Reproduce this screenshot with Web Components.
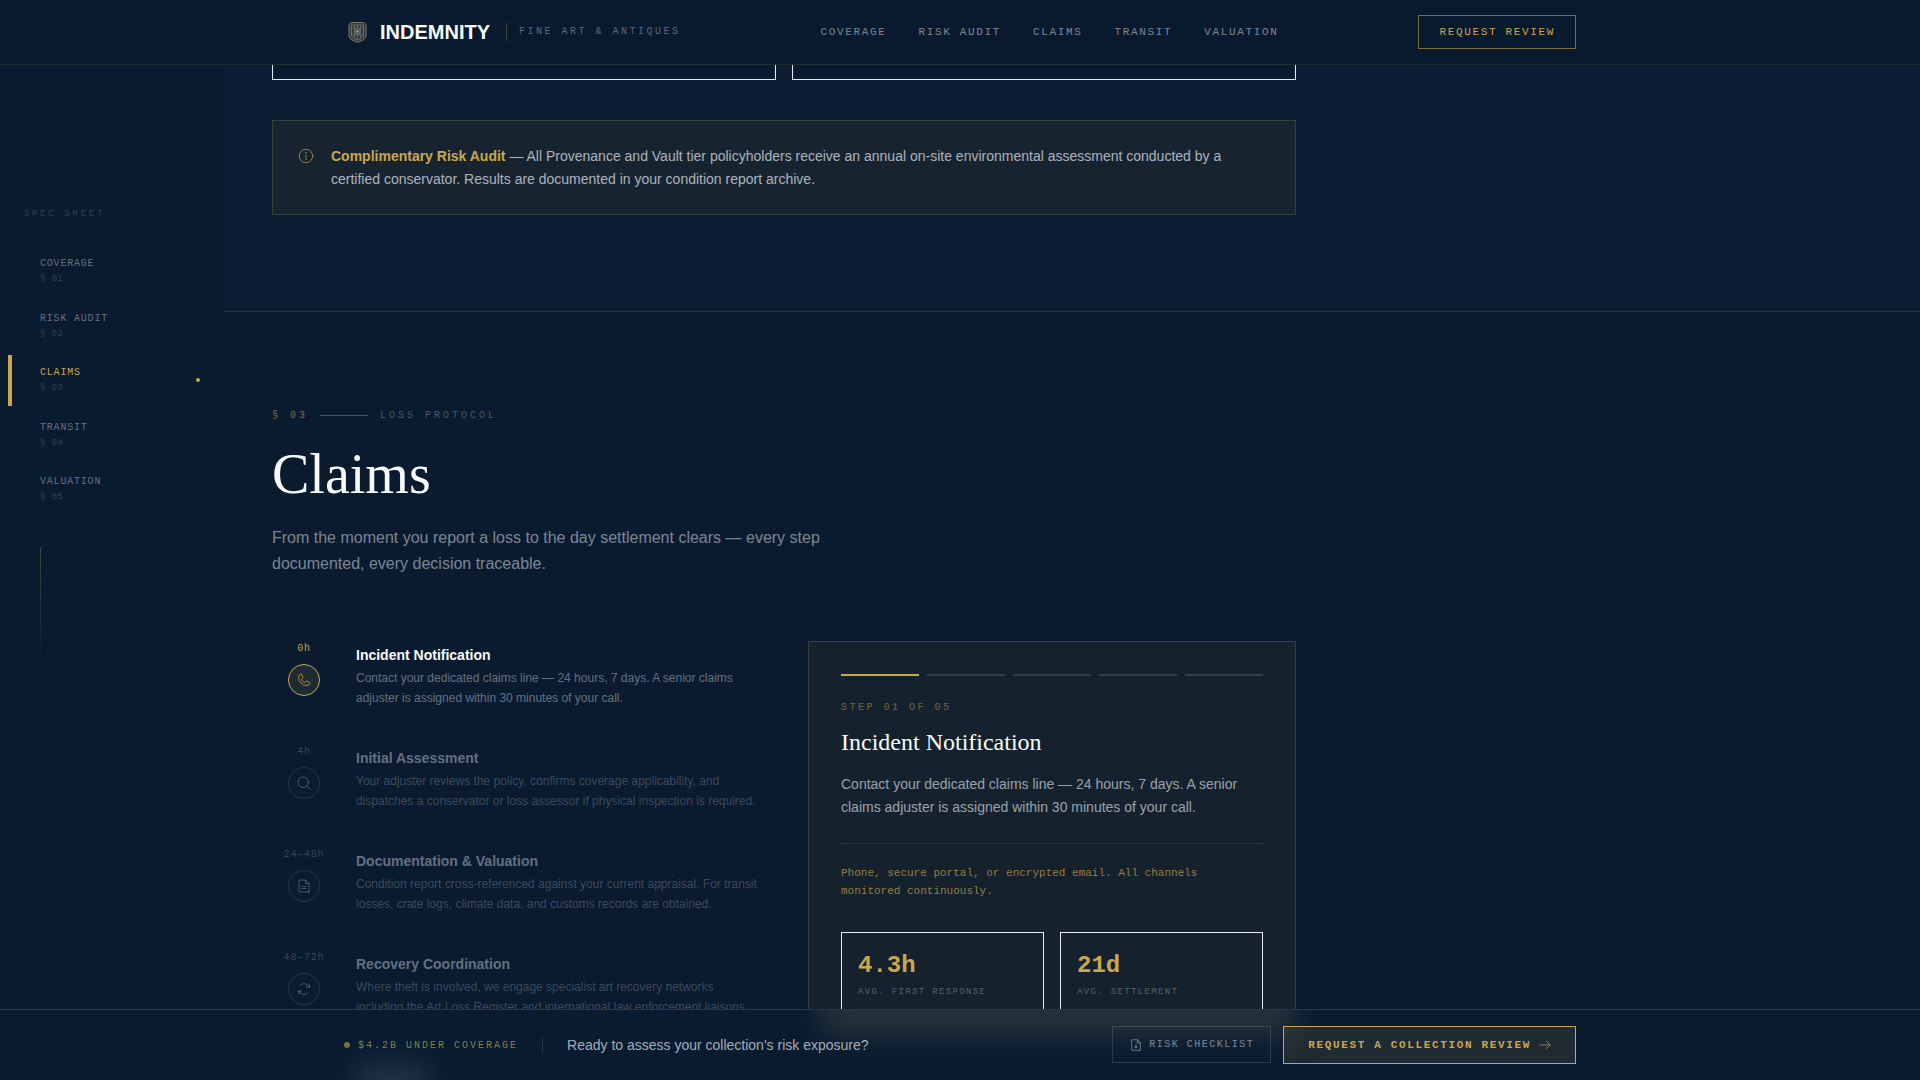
<!DOCTYPE html>
<html lang="en">
<head>
  <meta charset="utf-8">
  <meta name="viewport" content="width=device-width, initial-scale=1">
  <title>Indemnity - Fine Art &amp; Antiques</title>
  <style>
    :root{
      --navy: #0a1a2f;
      --navy-light: #0e1d33;
      --gold: #c9a84c;
      --line: rgba(180, 175, 90, 0.22);
      --paper: #e5ecf4;
      --sans: "Liberation Sans", Arial, sans-serif;
      --serif: "Liberation Serif", "Times New Roman", serif;
      --mono: "Liberation Mono", "Courier New", monospace;
    }

    body{
      background-color: var(--navy);
      color: #f8fafc;
      font-family: var(--sans);
      line-height: 1.5;
      margin: 0;
    }
  </style>
</head>
<body>
  <insurance-page></insurance-page>

  <script>
    const icons = {
      info: '<circle cx="128" cy="128" r="96"/><path d="M120 120h8v56h8"/><circle cx="126" cy="84" r="4"/>',
      phone: '<path d="M164.39,145.34a8,8,0,0,1,7.59-.69l47.16,21.13a8,8,0,0,1,4.8,8.3A48.33,48.33,0,0,1,176,216,136,136,0,0,1,40,80,48.33,48.33,0,0,1,81.92,32.06a8,8,0,0,1,8.3,4.8l21.13,47.2a8,8,0,0,1-.66,7.53L89.32,117a7.93,7.93,0,0,0-.54,7.81c8.27,16.93,25.77,34.22,42.75,42.41a7.92,7.92,0,0,0,7.83-.59Z"/>',
      search: '<circle cx="116" cy="116" r="84"/><path d="M175.4 175.4 224 224"/>',
      file: '<path d="M200,224H56a8,8,0,0,1-8-8V40a8,8,0,0,1,8-8h96l56,56V216A8,8,0,0,1,200,224Z"/><path d="M152 32v56h56M96 136h64M96 168h64"/>',
      refresh: '<path d="M168 96h48V48M216 96l-28-28a88 88 0 0 0-124-1M88 160H40v48M40 160l28 28a88 88 0 0 0 124 1"/>',
      download: '<path d="M200,224H56a8,8,0,0,1-8-8V40a8,8,0,0,1,8-8h96l56,56V216A8,8,0,0,1,200,224Z"/><path d="M152 32v56h56M128 120v64M100 156l28 28 28-28"/>',
      arrow: '<path d="M20 128h216M156 48l80 80-80 80"/>'
    }

    class UiIcon extends HTMLElement {
      constructor () {
        super()
        this.shadow = this.attachShadow({ mode: 'open' })
      }

      connectedCallback () {
        this.shadow.innerHTML =
        /* html */`
        <style>
          :host{
            display: block;
            flex: none;
            height: var(--size, 14px);
            width: var(--size, 14px);
          }

          svg{
            display: block;
            fill: none;
            height: 100%;
            stroke: currentColor;
            stroke-linecap: round;
            stroke-linejoin: round;
            stroke-width: var(--stroke, 14);
            width: 100%;
          }
        </style>
        <svg viewBox="0 0 256 256" aria-hidden="true">${icons[this.getAttribute('name')]}</svg>
        `
      }
    }

    customElements.define('ui-icon', UiIcon)

    class SiteHeader extends HTMLElement {
      constructor () {
        super()
        this.shadow = this.attachShadow({ mode: 'open' })
      }

      connectedCallback () {
        this.shadow.innerHTML =
        /* html */`
        <style>
          :host{
            background-color: #091a2f;
            border-bottom: 1px solid rgba(180, 175, 90, 0.14);
            display: block;
          }

          .bar{
            align-items: center;
            box-sizing: border-box;
            display: flex;
            height: 64px;
            justify-content: space-between;
            margin: 0 auto;
            max-width: 1280px;
            padding: 0 24px;
          }

          .brand{
            align-items: center;
            color: #f8fafc;
            display: flex;
            gap: 12px;
            text-decoration: none;
          }

          .brand svg{
            height: 24px;
            width: 24px;
          }

          .name{
            font-size: 20px;
            font-weight: 700;
          }

          .tagline{
            border-left: 1px solid rgba(201, 168, 76, 0.3);
            color: rgba(230, 236, 244, 0.38);
            font: 10px/18px var(--mono);
            letter-spacing: 0.25em;
            margin-left: 4px;
            padding-left: 12px;
          }

          nav{
            display: flex;
            gap: 32px;
          }

          nav a, button{
            font: 11px/16px var(--mono);
            letter-spacing: 0.15em;
          }

          nav a{
            color: rgba(230, 236, 244, 0.52);
            text-decoration: none;
          }

          button{
            background-color: transparent;
            border: 1px solid rgba(201, 168, 76, 0.6);
            color: var(--gold);
            cursor: pointer;
            padding: 8px 20px;
          }
        </style>

        <header class="bar">
          <a class="brand" href="#top">
            <svg viewBox="0 0 24 24" fill="none" stroke="#7d7a66" aria-hidden="true">
              <path d="M5 4.500 7 2.500h13l2 2V17l-3 3-5.500 2.500L8 20l-3-3z" fill="#303a40"/>
              <path d="M7.500 5h12v11l-2.500 2.500-3.500 1.500-3.500-1.500L7.500 16z" stroke-width=".8"/>
              <path d="M10.500 5v13M16.500 5v13M7.500 8h12M7.500 15h12M13.500 5v3M13.500 15v5" stroke-width=".6"/>
              <circle cx="13.500" cy="11.500" r="2.500" stroke="#a58f55" stroke-width=".8"/>
              <circle cx="13.500" cy="11.500" r="1" fill="#e8cf85" stroke="none"/>
            </svg>
            <span class="name">INDEMNITY</span>
            <span class="tagline">FINE ART &amp; ANTIQUES</span>
          </a>
          <nav aria-label="Main">
            <a href="#coverage">COVERAGE</a>
            <a href="#risk-audit">RISK AUDIT</a>
            <a href="#claims">CLAIMS</a>
            <a href="#transit">TRANSIT</a>
            <a href="#valuation">VALUATION</a>
          </nav>
          <button type="button">REQUEST REVIEW</button>
        </header>
        `
      }
    }

    customElements.define('site-header', SiteHeader)

    class SpecSidebar extends HTMLElement {
      constructor () {
        super()
        this.shadow = this.attachShadow({ mode: 'open' })
        this.items = ['COVERAGE', 'RISK AUDIT', 'CLAIMS', 'TRANSIT', 'VALUATION']
      }

      connectedCallback () {
        const active = this.getAttribute('active')

        this.shadow.innerHTML =
        /* html */`
        <style>
          :host{
            box-sizing: border-box;
            display: block;
            padding: 142px 8px 0;
          }

          h2{
            color: rgba(230, 236, 244, 0.2);
            font: 9px/15px var(--mono);
            letter-spacing: 0.3em;
            margin: 0 16px 24px;
          }

          nav{
            display: flex;
            flex-direction: column;
            gap: 4px;
          }

          a{
            align-items: center;
            border-left: 4px solid transparent;
            color: rgba(230, 236, 244, 0.42);
            display: flex;
            font-family: var(--mono);
            justify-content: space-between;
            padding: 10px 16px 10px 28px;
            text-decoration: none;
          }

          .label{
            display: block;
            font-size: 10px;
            letter-spacing: 0.08em;
          }

          .number{
            color: rgba(230, 236, 244, 0.2);
            display: block;
            font-size: 9px;
            letter-spacing: 0.05em;
            margin-top: 2px;
          }

          .active{
            border-color: var(--gold);
            color: var(--gold);
          }

          .active::after{
            background-color: var(--gold);
            border-radius: 50%;
            content: "";
            height: 4px;
            width: 4px;
          }

          .thread{
            background: linear-gradient(rgba(180, 175, 90, 0.3), transparent);
            height: 120px;
            margin: 32px 0 0 32px;
            width: 1px;
          }
        </style>

        <h2>SPEC SHEET</h2>
        <nav aria-label="Spec sheet">
          ${this.items.map((item, index) => `
            <a href="#${item.toLowerCase().replace(' ', '-')}" class="${item === active ? 'active' : ''}">
              <span>
                <span class="label">${item}</span>
                <span class="number">§ 0${index + 1}</span>
              </span>
            </a>
          `).join('')}
        </nav>
        <div class="thread"></div>
        `
      }
    }

    customElements.define('spec-sidebar', SpecSidebar)

    class InfoNotice extends HTMLElement {
      constructor () {
        super()
        this.shadow = this.attachShadow({ mode: 'open' })
      }

      connectedCallback () {
        this.shadow.innerHTML =
        /* html */`
        <style>
          :host{
            background-color: #172430;
            border: 1px solid var(--line);
            color: rgba(230, 236, 244, 0.72);
            display: flex;
            font-size: 14px;
            gap: 16px;
            line-height: 23px;
            padding: 24px 24px 23px;
          }

          ui-icon{
            --size: 18px;
            color: var(--gold);
            margin-top: 2px;
            opacity: 0.7;
          }

          ::slotted(strong){
            color: var(--gold);
          }
        </style>

        <ui-icon name="info"></ui-icon>
        <div><slot></slot></div>
        `
      }
    }

    customElements.define('info-notice', InfoNotice)

    class SectionHeading extends HTMLElement {
      constructor () {
        super()
        this.shadow = this.attachShadow({ mode: 'open' })
      }

      connectedCallback () {
        this.shadow.innerHTML =
        /* html */`
        <style>
          :host{
            display: block;
          }

          .eyebrow{
            align-items: center;
            color: rgba(230, 236, 244, 0.3);
            display: flex;
            font: 10px/15px var(--mono);
            gap: 12px;
            letter-spacing: 0.3em;
          }

          .number{
            color: rgba(201, 168, 76, 0.6);
          }

          .rule{
            background-color: rgba(201, 168, 76, 0.4);
            height: 1px;
            width: 48px;
          }

          h2{
            font: 400 56px/54px var(--serif);
            margin: 24px 0;
          }

          p{
            color: rgba(230, 236, 244, 0.52);
            font-size: 16px;
            line-height: 26px;
            margin: 0;
            max-width: 576px;
          }
        </style>

        <div class="eyebrow">
          <span class="number">${this.getAttribute('number')}</span>
          <span class="rule"></span>
          <span>${this.getAttribute('eyebrow')}</span>
        </div>
        <h2>${this.getAttribute('heading')}</h2>
        <p><slot></slot></p>
        `
      }
    }

    customElements.define('section-heading', SectionHeading)

    class ClaimStep extends HTMLElement {
      constructor () {
        super()
        this.shadow = this.attachShadow({ mode: 'open' })
      }

      connectedCallback () {
        this.shadow.innerHTML =
        /* html */`
        <style>
          :host{
            --tone: rgba(230, 236, 244, 0.22);
            --ring: rgba(230, 236, 244, 0.12);
            --fill: transparent;
            --title: rgba(230, 236, 244, 0.42);
            --copy: rgba(230, 236, 244, 0.24);
            --icon: rgba(230, 236, 244, 0.38);
            display: block;
          }

          :host([active]){
            --tone: var(--gold);
            --ring: var(--gold);
            --fill: rgba(201, 168, 76, 0.12);
            --title: #f8fafc;
            --copy: rgba(230, 236, 244, 0.42);
            --icon: var(--gold);
          }

          button{
            background-color: transparent;
            border: none;
            cursor: pointer;
            display: flex;
            font-family: inherit;
            gap: 20px;
            padding: 0 0 36px;
            text-align: left;
            width: 100%;
          }

          .marker{
            align-items: center;
            color: var(--tone);
            display: flex;
            flex: none;
            flex-direction: column;
            font: 10px/15px var(--mono);
            gap: 8px;
            letter-spacing: 0.08em;
            width: 64px;
          }

          .circle{
            align-items: center;
            background-color: var(--fill);
            border: 1px solid var(--ring);
            border-radius: 50%;
            box-sizing: border-box;
            color: var(--icon);
            display: flex;
            height: 32px;
            justify-content: center;
            width: 32px;
          }

          ui-icon{
            --size: 16px;
            --stroke: 12;
          }

          .text{
            color: var(--copy);
            flex: 1;
            font-size: 12px;
            line-height: 20px;
            padding-top: 4px;
          }

          .title{
            color: var(--title);
            display: block;
            font-size: 14px;
            font-weight: 700;
            line-height: 20px;
            margin-bottom: 3px;
          }
        </style>

        <button type="button">
          <span class="marker">
            <span>${this.getAttribute('time')}</span>
            <span class="circle"><ui-icon name="${this.getAttribute('icon')}"></ui-icon></span>
          </span>
          <span class="text">
            <span class="title">${this.getAttribute('heading')}</span>
            <slot></slot>
          </span>
        </button>
        `
      }
    }

    customElements.define('claim-step', ClaimStep)

    class StatBox extends HTMLElement {
      constructor () {
        super()
        this.shadow = this.attachShadow({ mode: 'open' })
      }

      connectedCallback () {
        this.shadow.innerHTML =
        /* html */`
        <style>
          :host{
            border: 1px solid var(--paper);
            display: block;
            flex: 1;
            font-family: var(--mono);
            padding: 16px;
          }

          .value{
            color: var(--gold);
            font-size: 24px;
            font-weight: 700;
            line-height: 34px;
          }

          .label{
            color: rgba(230, 236, 244, 0.32);
            font-size: 9px;
            letter-spacing: 0.15em;
            line-height: 14px;
            margin-top: 2px;
          }
        </style>

        <div class="value">${this.getAttribute('value')}</div>
        <div class="label"><slot></slot></div>
        `
      }
    }

    customElements.define('stat-box', StatBox)

    class StepPanel extends HTMLElement {
      constructor () {
        super()
        this.shadow = this.attachShadow({ mode: 'open' })
      }

      connectedCallback () {
        this.shadow.innerHTML =
        /* html */`
        <style>
          :host{
            background-color: #15222e;
            border: 1px solid var(--line);
            display: block;
            padding: 32px;
          }

          .progress{
            display: flex;
            gap: 8px;
            margin-bottom: 24px;
          }

          .progress span{
            background-color: rgba(230, 236, 244, 0.15);
            flex: 1;
            height: 2px;
          }

          .progress .done{
            background-color: var(--gold);
          }

          .step{
            color: rgba(201, 168, 76, 0.5);
            font: 10px/15px var(--mono);
            letter-spacing: 0.25em;
          }

          h3{
            font: 400 24px/30px var(--serif);
            margin: 12px 0 16px;
          }

          p{
            margin: 0;
          }

          .copy{
            color: rgba(230, 236, 244, 0.64);
            font-size: 14px;
            line-height: 1.625;
          }

          .note{
            border-top: 1px solid rgba(180, 175, 90, 0.14);
            color: rgba(201, 168, 76, 0.7);
            font: 11px/18px var(--mono);
            margin: 24px 0 32px;
            padding-top: 20px;
          }

          .stats{
            display: flex;
            gap: 16px;
          }
        </style>

        <div class="progress">
          <span class="done"></span><span></span><span></span><span></span><span></span>
        </div>
        <div class="step">STEP 01 OF 05</div>
        <h3>${this.getAttribute('heading')}</h3>
        <p class="copy"><slot></slot></p>
        <p class="note"><slot name="note"></slot></p>
        <div class="stats">
          <stat-box value="4.3h">AVG. FIRST RESPONSE</stat-box>
          <stat-box value="21d">AVG. SETTLEMENT</stat-box>
        </div>
        `
      }
    }

    customElements.define('step-panel', StepPanel)

    class ReviewBar extends HTMLElement {
      constructor () {
        super()
        this.shadow = this.attachShadow({ mode: 'open' })
      }

      connectedCallback () {
        this.shadow.innerHTML =
        /* html */`
        <style>
          :host{
            background-color: var(--navy);
            border-top: 1px solid var(--line);
            bottom: 0;
            display: block;
            left: 0;
            overflow: hidden;
            position: fixed;
            right: 0;
          }

          /* frosted light of the panel and the step list behind the bar */
          .glow{
            filter: blur(14px);
            position: absolute;
          }

          .glow-panel{
            background-color: #26323c;
            height: 60px;
            left: 820px;
            top: -34px;
            width: 476px;
          }

          .glow-step{
            background-color: #26374a;
            bottom: -16px;
            height: 30px;
            left: 356px;
            width: 72px;
          }

          .bar, .status, button{
            align-items: center;
            display: flex;
          }

          .bar{
            box-sizing: border-box;
            justify-content: space-between;
            margin: 0 auto;
            max-width: 1280px;
            padding: 16px 24px;
            position: relative;
          }

          .status{
            gap: 24px;
          }

          .covered{
            align-items: center;
            color: rgba(201, 168, 76, 0.7);
            display: flex;
            font: 10px/15px var(--mono);
            gap: 8px;
            letter-spacing: 0.2em;
          }

          .covered::before{
            background-color: var(--gold);
            border-radius: 50%;
            content: "";
            height: 6px;
            opacity: 0.6;
            width: 6px;
          }

          .question{
            border-left: 1px solid rgba(230, 236, 244, 0.12);
            color: rgba(230, 236, 244, 0.7);
            font-size: 14px;
            line-height: 16px;
            padding-left: 24px;
          }

          .actions{
            align-items: start;
            display: flex;
            gap: 12px;
          }

          button{
            cursor: pointer;
            letter-spacing: 0.15em;
          }

          .secondary{
            background-color: transparent;
            border: 1px solid rgba(230, 236, 244, 0.15);
            color: rgba(230, 236, 244, 0.5);
            font: 10px/15px var(--mono);
            gap: 6px;
            padding: 10px 16px;
          }

          .primary{
            background-color: rgba(201, 168, 76, 0.12);
            border: 1px solid var(--gold);
            color: var(--gold);
            font: 700 11px/16px var(--mono);
            gap: 8px;
            padding: 10px 24px;
          }

          .primary ui-icon{
            --size: 12px;
          }
        </style>

        <div class="glow glow-panel"></div>
        <div class="glow glow-step"></div>
        <footer class="bar">
          <div class="status">
            <span class="covered">$4.2B UNDER COVERAGE</span>
            <span class="question">Ready to assess your collection's risk exposure?</span>
          </div>
          <div class="actions">
            <button type="button" class="secondary"><ui-icon name="download"></ui-icon>RISK CHECKLIST</button>
            <button type="button" class="primary">REQUEST A COLLECTION REVIEW<ui-icon name="arrow"></ui-icon></button>
          </div>
        </footer>
        `
      }
    }

    customElements.define('review-bar', ReviewBar)

    class InsurancePage extends HTMLElement {
      constructor () {
        super()
        this.shadow = this.attachShadow({ mode: 'open' })
      }

      connectedCallback () {
        this.shadow.innerHTML =
        /* html */`
        <style>
          :host{
            display: flex;
            flex-direction: column;
            height: 100vh;
            overflow: hidden;
          }

          .layout{
            display: flex;
            flex: 1;
            min-height: 0;
          }

          spec-sidebar{
            flex: 0 0 224px;
          }

          main{
            flex: 1;
            overflow: hidden;
          }

          section{
            padding: 96px 48px;
          }

          .inner{
            max-width: 1024px;
          }

          .audit{
            background-color: var(--navy-light);
            border-bottom: 1px solid rgba(180, 175, 90, 0.14);
            padding-top: 0;
          }

          .cards{
            display: flex;
            gap: 16px;
            margin-bottom: 40px;
          }

          .cards div{
            background-color: #0c1b30;
            border: 1px solid var(--paper);
            border-top: none;
            flex: 1;
            height: 14px;
          }

          .claims{
            align-items: start;
            display: grid;
            gap: 48px;
            grid-template-columns: 1fr 1fr;
            margin-top: 64px;
          }

          ol{
            list-style: none;
            margin: 0;
            padding: 0;
          }
        </style>

        <site-header></site-header>
        <div class="layout">
          <spec-sidebar active="CLAIMS"></spec-sidebar>
          <main>
            <section class="audit" id="risk-audit">
              <div class="inner">
                <div class="cards"><div></div><div></div></div>
                <info-notice><strong>Complimentary Risk Audit</strong> — All Provenance and Vault tier policyholders receive an annual on-site environmental assessment conducted by a certified conservator. Results are documented in your condition report archive.</info-notice>
              </div>
            </section>
            <section id="claims">
              <div class="inner">
                <section-heading number="§ 03" eyebrow="LOSS PROTOCOL" heading="Claims">From the moment you report a loss to the day settlement clears — every step documented, every decision traceable.</section-heading>
                <div class="claims">
                  <ol>
                    <li><claim-step active time="0h" icon="phone" heading="Incident Notification">Contact your dedicated claims line — 24 hours, 7 days. A senior claims adjuster is assigned within 30 minutes of your call.</claim-step></li>
                    <li><claim-step time="4h" icon="search" heading="Initial Assessment">Your adjuster reviews the policy, confirms coverage applicability, and dispatches a conservator or loss assessor if physical inspection is required.</claim-step></li>
                    <li><claim-step time="24–48h" icon="file" heading="Documentation &amp; Valuation">Condition report cross-referenced against your current appraisal. For transit losses, crate logs, climate data, and customs records are obtained.</claim-step></li>
                    <li><claim-step time="48–72h" icon="refresh" heading="Recovery Coordination">Where theft is involved, we engage specialist art recovery networks including the Art Loss Register and international law enforcement liaisons.</claim-step></li>
                  </ol>
                  <step-panel heading="Incident Notification">
                    Contact your dedicated claims line — 24 hours, 7 days. A senior claims adjuster is assigned within 30 minutes of your call.
                    <span slot="note">Phone, secure portal, or encrypted email. All channels monitored continuously.</span>
                  </step-panel>
                </div>
              </div>
            </section>
          </main>
        </div>
        <review-bar></review-bar>
        `
      }
    }

    customElements.define('insurance-page', InsurancePage)
  </script>
</body>
</html>
